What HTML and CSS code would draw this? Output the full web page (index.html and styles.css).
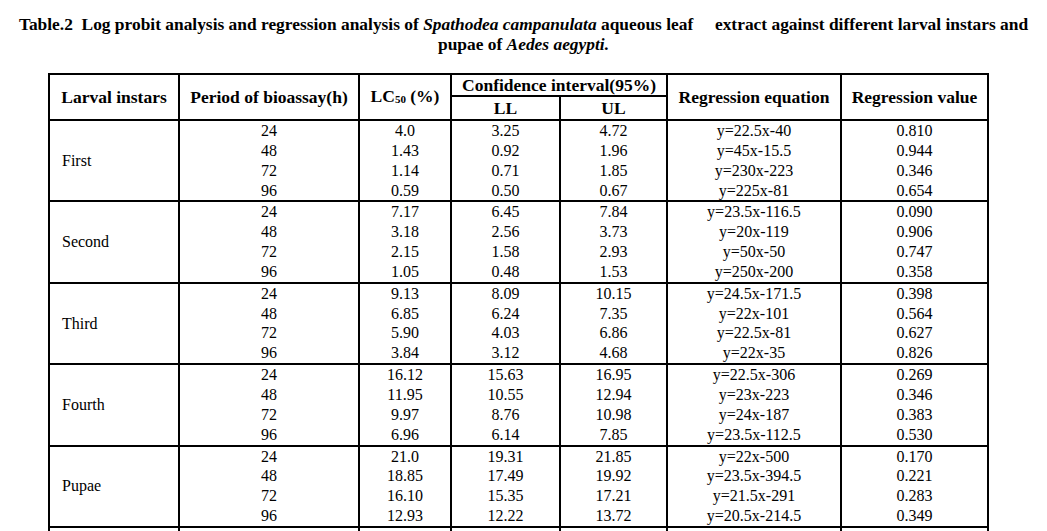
FILE: index.html
```html
<!DOCTYPE html>
<html>
<head>
<meta charset="utf-8">
<link rel="stylesheet" href="styles.css">
</head>
<body>
<h1 class="title">Table.2&nbsp; Log probit analysis and regression analysis of <i>Spathodea campanulata</i> aqueous leaf&nbsp;&nbsp;&nbsp;&nbsp; extract against different larval instars and<br>pupae of <i>Aedes aegypti.</i></h1>
<table class="data">
  <colgroup>
    <col class="c1"><col class="c2"><col class="c3"><col class="c4"><col class="c5"><col class="c6"><col class="c7">
  </colgroup>
  <thead>
    <tr class="h1">
      <th rowspan="2">Larval instars</th>
      <th rowspan="2">Period of bioassay(h)</th>
      <th rowspan="2">LC<sub>50</sub> (%)</th>
      <th colspan="2">Confidence interval(95%)</th>
      <th rowspan="2">Regression equation</th>
      <th rowspan="2">Regression value</th>
    </tr>
    <tr class="h2">
      <th>LL</th>
      <th>UL</th>
    </tr>
  </thead>
  <tbody>
    <tr>
      <td class="name">First</td>
      <td>24<br>48<br>72<br>96</td>
      <td>4.0<br>1.43<br>1.14<br>0.59</td>
      <td>3.25<br>0.92<br>0.71<br>0.50</td>
      <td>4.72<br>1.96<br>1.85<br>0.67</td>
      <td>y=22.5x-40<br>y=45x-15.5<br>y=230x-223<br>y=225x-81</td>
      <td>0.810<br>0.944<br>0.346<br>0.654</td>
    </tr>
    <tr>
      <td class="name">Second</td>
      <td>24<br>48<br>72<br>96</td>
      <td>7.17<br>3.18<br>2.15<br>1.05</td>
      <td>6.45<br>2.56<br>1.58<br>0.48</td>
      <td>7.84<br>3.73<br>2.93<br>1.53</td>
      <td>y=23.5x-116.5<br>y=20x-119<br>y=50x-50<br>y=250x-200</td>
      <td>0.090<br>0.906<br>0.747<br>0.358</td>
    </tr>
    <tr>
      <td class="name">Third</td>
      <td>24<br>48<br>72<br>96</td>
      <td>9.13<br>6.85<br>5.90<br>3.84</td>
      <td>8.09<br>6.24<br>4.03<br>3.12</td>
      <td>10.15<br>7.35<br>6.86<br>4.68</td>
      <td>y=24.5x-171.5<br>y=22x-101<br>y=22.5x-81<br>y=22x-35</td>
      <td>0.398<br>0.564<br>0.627<br>0.826</td>
    </tr>
    <tr>
      <td class="name">Fourth</td>
      <td>24<br>48<br>72<br>96</td>
      <td>16.12<br>11.95<br>9.97<br>6.96</td>
      <td>15.63<br>10.55<br>8.76<br>6.14</td>
      <td>16.95<br>12.94<br>10.98<br>7.85</td>
      <td>y=22.5x-306<br>y=23x-223<br>y=24x-187<br>y=23.5x-112.5</td>
      <td>0.269<br>0.346<br>0.383<br>0.530</td>
    </tr>
    <tr>
      <td class="name">Pupae</td>
      <td>24<br>48<br>72<br>96</td>
      <td>21.0<br>18.85<br>16.10<br>12.93</td>
      <td>19.31<br>17.49<br>15.35<br>12.22</td>
      <td>21.85<br>19.92<br>17.21<br>13.72</td>
      <td>y=22x-500<br>y=23.5x-394.5<br>y=21.5x-291<br>y=20.5x-214.5</td>
      <td>0.170<br>0.221<br>0.283<br>0.349</td>
    </tr>
    <tr class="tail">
      <td></td><td></td><td></td><td></td><td></td><td></td><td></td>
    </tr>
  </tbody>
</table>
</body>
</html>
```
FILE: styles.css
```css
html, body {
  margin: 0;
  padding: 0;
  background: #ffffff;
  color: #000000;
  font-family: "Liberation Serif", "Times New Roman", serif;
}

.title {
  margin: 14px 0 0 0;
  font-size: 17.4px;
  line-height: 20px;
  font-weight: bold;
  text-align: center;
}

.title i {
  font-style: italic;
}

.data {
  margin: 19px 0 0 48px;
  width: 941px;
  table-layout: fixed;
  border-collapse: collapse;
  font-size: 16px;
  line-height: 19.85px;
}

.c1 { width: 130px; }
.c2 { width: 180px; }
.c3 { width: 92px; }
.c4 { width: 109px; }
.c5 { width: 107px; }
.c6 { width: 174px; }
.c7 { width: 147px; }

.data th,
.data td {
  border: 2px solid #000;
  padding: 0;
  text-align: center;
  vertical-align: middle;
}

.data th {
  font-size: 17.5px;
  line-height: 20px;
  font-weight: bold;
}

.h1 th { height: 20px; }
.h2 th { height: 22px; }

.data th sub {
  font-size: 11px;
  vertical-align: -1px;
}

.data td.name {
  text-align: left;
  padding-left: 12px;
}

.tail td {
  height: 40px;
}
```
